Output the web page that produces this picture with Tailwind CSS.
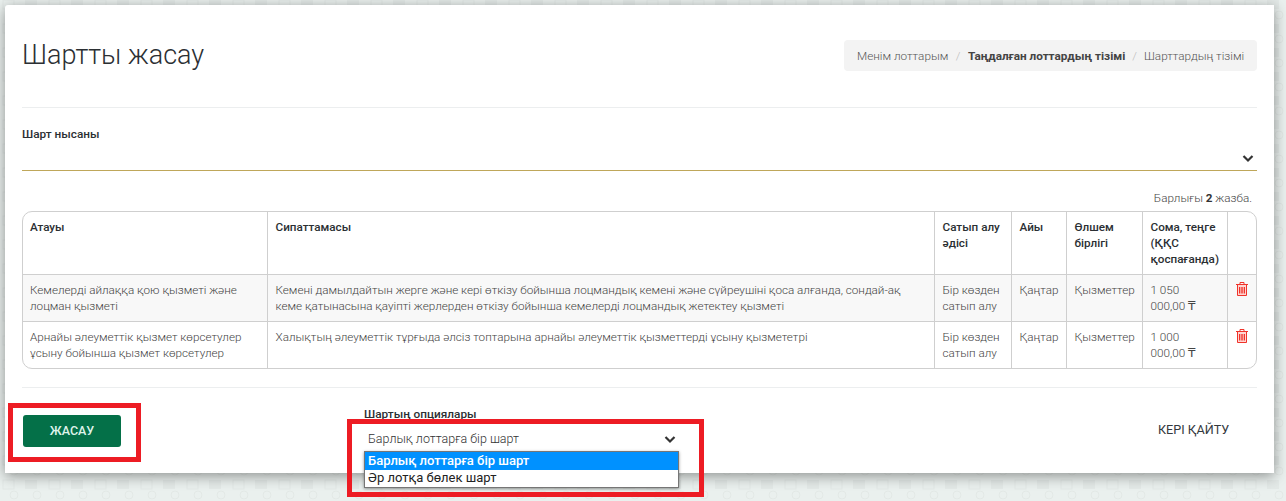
<!DOCTYPE html>
<html lang="kk">

<head>
	<meta charset="utf-8" />
	<script src="https://cdn.jsdelivr.net/npm/@tailwindcss/browser@4"></script>
	<title>Шартты жасау</title>
</head>

<body class="relative h-[501px] w-[1286px] overflow-hidden bg-[#eaf0ee] font-['Roboto',sans-serif] text-[11.700px] leading-4 font-light text-[#444]">
	<!-- page background pattern -->
	<svg class="absolute inset-0" width="1286" height="501" aria-hidden="true">
		<defs>
			<pattern id="bgp" width="46" height="24" patternUnits="userSpaceOnUse" y="-3">
				<rect x="3" y="3" width="11" height="9" fill="none" stroke="#e2e8e6" />
				<rect x="25" y="3" width="12" height="9" fill="#e3e9e7" />
				<circle cx="14" cy="18" r="4" fill="none" stroke="#e2e8e6" />
				<circle cx="37" cy="18" r="4" fill="none" stroke="#e2e8e6" />
			</pattern>
		</defs>
		<rect width="1286" height="501" fill="url(#bgp)" />
	</svg>

	<main class="absolute left-[5px] top-[5px] h-[468px] w-[1269px] rounded-tl-[3px] bg-white px-[17px] shadow-[0_3px_14px_rgba(0,0,0,0.4)]">
		<header class="flex h-[103px] items-start justify-between border-b border-[#eceeef]">
			<h1 class="mt-[33px] text-[27px] leading-[34px] font-light whitespace-nowrap text-[#2b2f33]">Шартты жасау</h1>
			<nav class="mt-[35px] flex h-[31px] w-[413px] items-center rounded-[4px] bg-[#f3f3f3] pl-[13px] text-[11.750px] whitespace-nowrap text-[#555]">
				<span>Менім лоттарым</span>
				<span class="mx-[7.500px] text-[#bbb]">/</span>
				<span class="font-bold text-[#444]">Таңдалған лоттардың тізімі</span>
				<span class="mx-[7px] text-[#bbb]">/</span>
				<span>Шарттардың тізімі</span>
			</nav>
		</header>

		<div class="relative h-[63px] border-b border-[#bfa75a]">
			<label class="absolute top-[18px] left-0 text-[11.800px] font-medium text-[#2b2f33]">Шарт нысаны</label>
			<svg class="absolute top-[46px] right-[3px]" width="12" height="9" viewBox="0 0 12 9" fill="none" stroke="#333" stroke-width="2.2"><path d="M1.500 2 L6 6.500 L10.500 2" /></svg>
		</div>

		<p class="mt-[19px] h-[21px] pr-[5px] text-right">Барлығы <b class="font-bold text-[#333]">2</b> жазба.</p>

		<div class="h-[158px] w-[1235px] overflow-hidden rounded-[10px] border border-[#cfcfcf]">
			<table class="w-full table-fixed border-collapse">
				<colgroup>
					<col class="w-[244px]" />
					<col class="w-[667px]" />
					<col class="w-[77px]" />
					<col class="w-[55px]" />
					<col class="w-[76px]" />
					<col class="w-[85px]" />
					<col />
				</colgroup>
				<thead class="align-top text-[#2b2f33]">
					<tr class="h-[62px]">
						<th class="border-r border-[#cfcfcf] pt-[7px] pr-[8px] pl-[7px] text-left font-medium">Атауы</th>
						<th class="border-r border-[#cfcfcf] px-[8px] pt-[7px] text-left font-medium">Сипаттамасы</th>
						<th class="border-r border-[#cfcfcf] px-[8px] pt-[7px] text-left font-medium">Сатып алу әдісі</th>
						<th class="border-r border-[#cfcfcf] px-[8px] pt-[7px] text-left font-medium">Айы</th>
						<th class="border-r border-[#cfcfcf] px-[8px] pt-[7px] text-left font-medium">Өлшем бірлігі</th>
						<th class="border-r border-[#cfcfcf] px-[8px] pt-[7px] text-left font-medium">Сома, теңге (ҚҚС қоспағанда)</th>
						<th></th>
					</tr>
				</thead>
				<tbody class="align-top">
					<tr class="h-[47px] border-t border-[#cfcfcf] bg-[#f8f8f8]">
						<td class="border-r border-[#cfcfcf] pt-[7px] pr-[8px] pl-[7px]">Кемелерді айлаққа қою қызметі және лоцман қызметі</td>
						<td class="border-r border-[#cfcfcf] px-[8px] pt-[7px]">Кемені дамылдайтын жерге және кері өткізу бойынша лоцмандық кемені және сүйреушіні қоса алғанда, сондай-ақ кеме қатынасына қауіпті жерлерден өткізу бойынша кемелерді лоцмандық жетектеу қызметі</td>
						<td class="border-r border-[#cfcfcf] px-[8px] pt-[7px]">Бір көзден сатып алу</td>
						<td class="border-r border-[#cfcfcf] px-[8px] pt-[7px]">Қаңтар</td>
						<td class="border-r border-[#cfcfcf] px-[8px] pt-[7px]">Қызметтер</td>
						<td class="border-r border-[#cfcfcf] px-[8px] pt-[7px]">1 050<br />000,00 <span class="font-['DejaVu_Sans'] font-normal">₸</span></td>
						<td class="pt-[7px] pl-[8px]">
							<svg width="12" height="14" viewBox="0 0 12 14" fill="none" stroke="#f0332a"><path fill="#ffd6d2" d="M1.500 2.500V13.500H10.500V2.500Z" /><path d="M0 2.500H12M4 2.500V0.500H8V2.500M3.500 5V11.500M5.200 5V11.500M6.800 5V11.500M8.500 5V11.500" /></svg>
						</td>
					</tr>
					<tr class="h-[47px] border-t border-[#cfcfcf]">
						<td class="border-r border-[#cfcfcf] pt-[7px] pr-[8px] pl-[7px]">Арнайы әлеуметтік қызмет көрсетулер ұсыну бойынша қызмет көрсетулер</td>
						<td class="border-r border-[#cfcfcf] px-[8px] pt-[7px]">Халықтың әлеуметтік тұрғыда әлсіз топтарына арнайы әлеуметтік қызметтерді ұсыну қызмететрі</td>
						<td class="border-r border-[#cfcfcf] px-[8px] pt-[7px]">Бір көзден сатып алу</td>
						<td class="border-r border-[#cfcfcf] px-[8px] pt-[7px]">Қаңтар</td>
						<td class="border-r border-[#cfcfcf] px-[8px] pt-[7px]">Қызметтер</td>
						<td class="border-r border-[#cfcfcf] px-[8px] pt-[7px]">1 000<br />000,00 <span class="font-['DejaVu_Sans'] font-normal">₸</span></td>
						<td class="pt-[7px] pl-[8px]">
							<svg width="12" height="14" viewBox="0 0 12 14" fill="none" stroke="#f0332a"><path fill="#ffd6d2" d="M1.500 2.500V13.500H10.500V2.500Z" /><path d="M0 2.500H12M4 2.500V0.500H8V2.500M3.500 5V11.500M5.200 5V11.500M6.800 5V11.500M8.500 5V11.500" /></svg>
						</td>
					</tr>
				</tbody>
			</table>
		</div>

		<div class="mt-[18px] border-t border-[#eceeef]"></div>

		<footer class="flex items-start">
			<button class="mt-[27px] ml-px h-[32px] w-[98px] rounded-[3px] bg-[#047048] text-center text-[12.500px] font-medium text-[#dff3ea]">ЖАСАУ</button>
			<div class="mt-[18px] ml-[243px] w-[315px]">
				<label class="block text-[11.800px] font-medium text-[#2b2f33]">Шартың опциялары</label>
				<div class="mt-[5px] flex h-[24px] items-center justify-between pr-[3px] pl-[4px] text-[12.500px] text-[#333]">
					<span>Барлық лоттарға бір шарт</span>
					<svg width="12" height="9" viewBox="0 0 12 9" fill="none" stroke="#333" stroke-width="2.2"><path d="M1.500 2 L6 6.500 L10.500 2" /></svg>
				</div>
			</div>
			<a class="mt-[34px] ml-[479px] text-[12.600px] font-normal whitespace-nowrap text-[#33383d]">КЕРІ ҚАЙТУ</a>
		</footer>
	</main>

	<!-- open native select list -->
	<ul class="absolute top-[451px] left-[364px] h-[37px] w-[315px] border border-[#767676] bg-white text-[13px] leading-[17px] font-normal text-[#222] shadow-[0_1px_3px_rgba(0,0,0,0.4)]">
		<li class="h-[18px] bg-[#0091ff] pl-[3px] font-medium text-white">Барлық лоттарға бір шарт</li>
		<li class="pl-[3px] leading-[16px]">Әр лотқа бөлек шарт</li>
	</ul>

	<!-- red annotation frames -->
	<div class="absolute top-[403px] left-[8px] h-[59px] w-[133px] border-[5px] border-[#ed1c24]"></div>
	<div class="absolute top-[419px] left-[347px] h-[78px] w-[357px] border-[5px] border-[#ed1c24]"></div>
</body>

</html>
